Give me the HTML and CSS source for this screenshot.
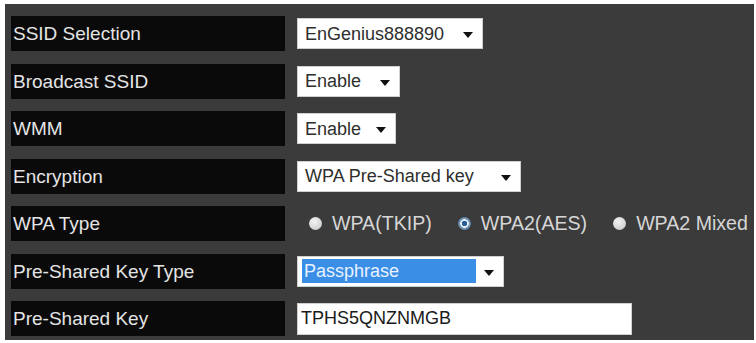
FILE: index.html
```html
<!DOCTYPE html>
<html>
<head>
<meta charset="utf-8">
<link rel="stylesheet" href="styles.css">
</head>
<body>
<div class="panel">
  <div class="row">
    <div class="label">SSID Selection</div>
    <div class="ctl"><span class="select w-ssid"><span class="val">EnGenius888890</span><svg class="arrow" viewBox="0 0 10 6"><path d="M0 0h10L5 6z"/></svg></span></div>
  </div>
  <div class="row">
    <div class="label">Broadcast SSID</div>
    <div class="ctl"><span class="select w-enable"><span class="val">Enable</span><svg class="arrow" viewBox="0 0 10 6"><path d="M0 0h10L5 6z"/></svg></span></div>
  </div>
  <div class="row">
    <div class="label">WMM</div>
    <div class="ctl"><span class="select w-wmm"><span class="val">Enable</span><svg class="arrow" viewBox="0 0 10 6"><path d="M0 0h10L5 6z"/></svg></span></div>
  </div>
  <div class="row">
    <div class="label">Encryption</div>
    <div class="ctl"><span class="select w-enc"><span class="val">WPA Pre-Shared key</span><svg class="arrow" viewBox="0 0 10 6"><path d="M0 0h10L5 6z"/></svg></span></div>
  </div>
  <div class="row">
    <div class="label">WPA Type</div>
    <div class="ctl radios">
      <span class="radio"><span class="dot"></span>WPA(TKIP)</span>
      <span class="radio"><span class="dot on"></span>WPA2(AES)</span>
      <span class="radio"><span class="dot"></span>WPA2 Mixed</span>
    </div>
  </div>
  <div class="row">
    <div class="label">Pre-Shared Key Type</div>
    <div class="ctl"><span class="select w-pass"><span class="val hl">Passphrase</span><svg class="arrow" viewBox="0 0 10 6"><path d="M0 0h10L5 6z"/></svg></span></div>
  </div>
  <div class="row">
    <div class="label">Pre-Shared Key</div>
    <div class="ctl"><span class="input">TPHS5QNZNMGB</span></div>
  </div>
</div>
</body>
</html>
```
FILE: styles.css
```css
html, body {
  margin: 0;
  padding: 0;
  background: #ffffff;
}
body {
  font-family: "Liberation Sans", Arial, sans-serif;
}
.panel {
  margin: 4px 0 0 5px;
  width: 749px;
  height: 336px;
  box-sizing: border-box;
  background: #3b3b3b;
  padding: 12px 0 0 6px;
  display: flex;
  flex-direction: column;
  gap: 12.5px;
}
.row {
  display: flex;
  align-items: center;
  height: 35px;
}
.label {
  width: 272px;
  height: 100%;
  background: #0a0a0a;
  color: #e4e4e4;
  font-size: 19px;
  line-height: 35px;
  padding-left: 2px;
  white-space: nowrap;
}
.ctl {
  margin-left: 12px;
  display: flex;
  align-items: center;
}
.select {
  display: flex;
  align-items: center;
  box-sizing: border-box;
  height: 31px;
  background: #ffffff;
  border: 1px solid #d0d0d0;
  padding: 0 0 0 7px;
  font-size: 18px;
  color: #2e2e2e;
  position: relative;
}
.select .val {
  line-height: 24px;
  white-space: nowrap;
}
.select .val.hl {
  background: #3b8ee6;
  color: #e8f2ff;
  width: 172px;
  padding-left: 2px;
  margin-left: -3px;
}
.arrow {
  width: 10px;
  height: 6px;
  fill: #111;
  position: absolute;
  right: 9px;
  top: 13px;
}
.w-ssid { width: 186px; }
.w-enable { width: 103px; }
.w-wmm { width: 99px; }
.w-enc { width: 224px; }
.w-pass { width: 207px; }
.input {
  display: flex;
  align-items: center;
  box-sizing: border-box;
  width: 335px;
  height: 32px;
  background: #ffffff;
  border: 1px solid #d0d0d0;
  padding-left: 3px;
  font-size: 18px;
  color: #1a1a1a;
}
.ctl.radios {
  margin-left: 24px;
  gap: 26px;
  color: #d6d6d6;
  font-size: 19.6px;
}
.radio {
  display: flex;
  align-items: center;
  gap: 10px;
  white-space: nowrap;
}
.dot {
  width: 13px;
  height: 13px;
  border-radius: 50%;
  background: radial-gradient(circle at 40% 35%, #f4f4f4, #d2d2d2 70%, #a9a9a9);
  display: inline-block;
}
.dot.on {
  background: radial-gradient(circle, #2a5f95 0 2.5px, #e8f0f8 3px 4px, #7da2c4 4.5px, #5c7f9f 6.5px);
}
```
